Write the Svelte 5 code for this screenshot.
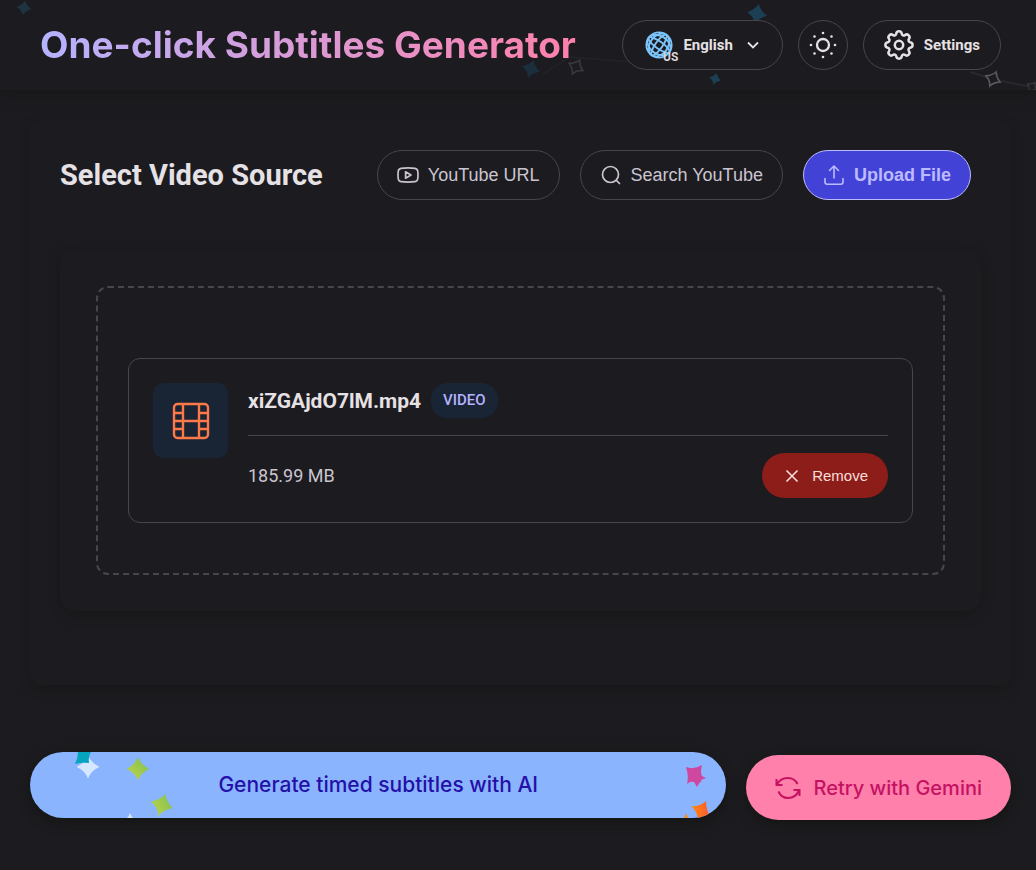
<script>
  const polar = (r, deg) => {
    const a = (deg * Math.PI) / 180;
    return `${(16 + r * Math.cos(a)).toFixed(2)} ${(16 + r * Math.sin(a)).toFixed(2)}`;
  };

  // Eight rounded teeth joined by concave valleys.
  let gearPath = `M${polar(11.5, -14)}`;
  for (let i = 0; i < 8; i++) {
    const a = i * 45;
    gearPath += `A2.8 2.8 0 0 1 ${polar(11.5, a + 14)}A2 2 0 0 0 ${polar(11.5, a + 31)}`;
  }
  gearPath += 'Z';

  const rays = [0, 45, 90, 135, 180, 225, 270, 315].map((deg) => {
    const a = (deg * Math.PI) / 180;
    return { x: 14 + 12 * Math.cos(a), y: 14 + 12 * Math.sin(a) };
  });

  const star = 'M0 -12Q3.5 -4.500 12 0Q3.5 3.500 0 12Q-3.5 3.500 -12 0Q-3.5 -4.500 0 -12Z';

  let source = $state('upload');
  let hasFile = $state(true);
</script>

<header>
  <svg class="sky left" width="60" height="90" aria-hidden="true">
    <path d={star} transform="translate(24 8) rotate(8) scale(.62)" fill="#1c3541" />
  </svg>
  <svg class="sky right" width="536" height="90" aria-hidden="true">
    <path d="M43 74L70 57Q110 60 160 65" fill="none" stroke="#222125" stroke-width="2" />
    <path d="M470 72L492 79L536 88" fill="none" stroke="#29282c" stroke-width="2" />
    <path d={star} transform="translate(31 69) rotate(18) scale(.78)" fill="#1b2e3b" />
    <path d={star} transform="translate(76 67) rotate(28) scale(.64)" fill="#1d1c20" stroke="#39383c" stroke-width="2.500" />
    <path d={star} transform="translate(257 14) rotate(10) scale(.84)" fill="#1d3f54" />
    <path d={star} transform="translate(215 79) rotate(16) scale(.5)" fill="#1d3f54" />
    <path d={star} transform="translate(493 79) rotate(24) scale(.64)" fill="#1d1c20" stroke="#59585c" stroke-width="2.500" />
    <path d={star} transform="translate(532 87) rotate(35) scale(.45)" fill="#1d1c20" stroke="#3d3c40" stroke-width="2.500" />
  </svg>

  <h1>One-click Subtitles Generator</h1>

  <div class="actions">
    <button class="outline language" type="button">
      <span class="globe">
        <svg width="28" height="28" viewBox="0 0 28 28" fill="none" stroke="#7cc4fa" stroke-width="1.900" aria-hidden="true">
          <circle cx="14" cy="14" r="12.600" />
          <g transform="rotate(35 14 14)">
            <ellipse cx="14" cy="14" rx="3.600" ry="12.600" />
            <ellipse cx="14" cy="14" rx="9" ry="12.600" />
            <ellipse cx="14" cy="14" rx="12.600" ry="3.600" />
            <ellipse cx="14" cy="14" rx="12.600" ry="9" />
          </g>
        </svg>
        <span class="region">US</span>
      </span>
      <span>English</span>
      <svg class="chevron" width="14" height="14" viewBox="0 0 14 14" fill="none" stroke="currentColor" stroke-width="1.8" aria-hidden="true"><path d="M2 4.500L7 9.500L12 4.500" /></svg>
    </button>
    <button class="outline theme" type="button" aria-label="Toggle theme">
      <svg width="28" height="28" viewBox="0 0 28 28" aria-hidden="true">
        <circle cx="14" cy="14" r="6" fill="none" stroke="currentColor" stroke-width="2.300" />
        {#each rays as ray}
          <circle cx={ray.x} cy={ray.y} r="1.300" fill="currentColor" />
        {/each}
      </svg>
    </button>
    <button class="outline settings" type="button">
      <svg width="32" height="32" viewBox="0 0 32 32" fill="none" stroke="currentColor" stroke-width="2.500" aria-hidden="true">
        <path d={gearPath} />
        <circle cx="16" cy="16" r="4.200" />
      </svg>
      <span>Settings</span>
    </button>
  </div>
</header>

<main>
  <section class="card">
    <div class="card-head">
      <h2>Select Video Source</h2>
      <div class="tabs">
        <button class="tab" class:active={source === 'url'} type="button" onclick={() => (source = 'url')}>
          <svg width="22" height="22" viewBox="0 0 22 22" fill="none" stroke="currentColor" stroke-width="1.700" stroke-linejoin="round" aria-hidden="true">
            <path d="M4 4.400Q11 3.500 18 4.400Q20.500 4.700 20.800 7.500Q21.200 11 20.800 14.500Q20.500 17.300 18 17.600Q11 18.500 4 17.600Q1.500 17.300 1.200 14.500Q.8 11 1.200 7.500Q1.500 4.700 4 4.400Z" />
            <path d="M8.600 7.800V14.200L14 11Z" />
          </svg>
          YouTube URL
        </button>
        <button class="tab" class:active={source === 'search'} type="button" onclick={() => (source = 'search')}>
          <svg width="22" height="22" viewBox="0 0 22 22" fill="none" stroke="currentColor" stroke-width="1.700" stroke-linecap="round" aria-hidden="true">
            <circle cx="10.500" cy="10.500" r="8" />
            <path d="M16.500 16.500L19.500 19.500" />
          </svg>
          Search YouTube
        </button>
        <button class="tab" class:active={source === 'upload'} type="button" onclick={() => (source = 'upload')}>
          <svg width="22" height="22" viewBox="0 0 22 22" fill="none" stroke="currentColor" stroke-width="1.600" stroke-linecap="round" stroke-linejoin="round" aria-hidden="true">
            <path d="M11 14V2.500M6.500 6.500L11 2L15.500 6.500M2 14.500V18Q2 20.200 4.200 20.200H17.800Q20 20.200 20 18V14.500" />
          </svg>
          Upload File
        </button>
      </div>
    </div>

    <div class="panel">
      <div class="dropzone">
        {#if hasFile}
          <article class="file">
            <div class="thumb">
              <svg width="38" height="38" viewBox="0 0 38 38" fill="none" stroke="#ff7849" stroke-width="2.400" aria-hidden="true">
                <rect x="2" y="2" width="34" height="34" rx="3.500" />
                <path d="M11 2V36M27 2V36M11 19H27M2 11H11M2 19H11M2 27H11M27 11H36M27 19H36M27 27H36" />
              </svg>
            </div>
            <div class="info">
              <div class="name-row">
                <h3>xiZGAjdO7lM.mp4</h3>
                <span class="badge">VIDEO</span>
              </div>
              <div class="meta-row">
                <span class="size">185.99 MB</span>
                <button class="remove" type="button" onclick={() => (hasFile = false)}>
                  <svg width="20" height="20" viewBox="0 0 20 20" fill="none" stroke="currentColor" stroke-width="1.600" aria-hidden="true"><path d="M4.500 4.500L15.500 15.500M15.500 4.500L4.500 15.500" /></svg>
                  Remove
                </button>
              </div>
            </div>
          </article>
        {/if}
      </div>
    </div>
  </section>

  <div class="bottom">
    <button class="generate" type="button">
      <svg class="confetti start" width="160" height="66" aria-hidden="true">
        <defs>
          <linearGradient id="lime" x1="0" y1="1" x2="1" y2="0">
            <stop offset="0" stop-color="#c6d545" /><stop offset="1" stop-color="#7abf55" />
          </linearGradient>
        </defs>
        <path d={star} transform="translate(58 15) scale(.95)" fill="#d6e8ff" />
        <path d="M48 0H61Q58 5 59 11Q52 10 45 12Q48 6 48 0Z" fill="#05a5bf" />
        <path d={star} transform="translate(108 17) scale(.95)" fill="url(#lime)" />
        <path d={star} transform="translate(132 53) rotate(17) scale(.95)" fill="url(#lime)" />
        <path d="M97 66Q99 64 100 61Q101 64 103 66Z" fill="#d6e8ff" />
      </svg>
      <span>Generate timed subtitles with AI</span>
      <svg class="confetti end" width="80" height="66" aria-hidden="true">
        <defs>
          <linearGradient id="sunset"><stop offset="0" stop-color="#ff8b0f" /><stop offset="1" stop-color="#fa5a30" /></linearGradient>
        </defs>
        <path d="M40 15Q48 18 56 13Q54 20 56 24L60 26L55 28Q56 31 54 30L51 35L48 30Q44 29 41 32Q43 24 40 15Z" fill="#cf489f" />
        <path d="M45 54Q54 55 60 49Q60 56 64 66H52Q50 58 45 54Z" fill="url(#sunset)" />
        <path d="M38 66L40 61L42 66Z" fill="#ff8b0f" />
      </svg>
    </button>
    <button class="retry" type="button">
      <svg width="26" height="26" viewBox="0 0 26 26" fill="none" stroke="currentColor" stroke-width="2" aria-hidden="true">
        <path d="M1.500 4V10H7.500M2 9.500C4 5.500 8 3 13 3C17 3 20.500 5 22.500 9M24.500 21V15H18.500M24 15.500C22 20 18 23 13 23C9 23 5.500 21 3.500 16.500" />
      </svg>
      Retry with Gemini
    </button>
  </div>
</main>

<style>
  :global(body) {
    margin: 0;
    background: #1c1b1f;
    color: #e6e1e5;
    font-family: Roboto, sans-serif;
  }

  button {
    display: flex;
    align-items: center;
    box-sizing: border-box;
    cursor: pointer;
    white-space: nowrap;
  }

  svg {
    flex: none;
  }

  h1,
  h2,
  h3 {
    margin: 0;
  }

  header {
    position: relative;
    display: flex;
    align-items: center;
    justify-content: space-between;
    padding: 20px 35px 20px 40px;
    box-shadow: 0 4px 12px rgba(18, 20, 16, 0.5);
  }

  .sky {
    position: absolute;
    top: 0;
    filter: blur(0.5px);
  }

  .sky.left {
    left: 0;
  }

  .sky.right {
    right: 0;
  }

  h1 {
    position: relative;
    background: linear-gradient(90deg, #b5b3ff, #ff80ab);
    background-clip: text;
    color: transparent;
    font: 700 37px/50px Inter, sans-serif;
    white-space: nowrap;
  }

  .actions {
    position: relative;
    display: flex;
    gap: 15px;
  }

  .outline {
    height: 50px;
    border: 1px solid #48464c;
    border-radius: 25px;
    background: #1c1b1f;
    color: #e6e1e5;
    font: 700 15px/20px Roboto, sans-serif;
  }

  .language {
    gap: 10px;
    padding: 0 22px;
  }

  .globe {
    position: relative;
    display: flex;
  }

  .region {
    position: absolute;
    right: -5px;
    bottom: -5px;
    color: #d9d5da;
    font-size: 12px;
    line-height: 14px;
  }

  .chevron {
    margin-left: 3px;
  }

  .theme {
    width: 50px;
    justify-content: center;
    padding: 0;
  }

  .settings {
    gap: 9px;
    padding: 0 20px 0 19px;
  }

  main {
    padding: 30px 25px 50px 30px;
  }

  .card {
    padding: 30px 30px 74px;
    border-radius: 12px;
    box-shadow: 0 4px 12px rgba(18, 20, 16, 0.4);
  }

  .card-head {
    display: flex;
    align-items: center;
    justify-content: space-between;
    padding-right: 10px;
  }

  h2 {
    font: 700 29px/36px Roboto, sans-serif;
    white-space: nowrap;
  }

  .tabs {
    display: flex;
    gap: 20px;
  }

  .tab {
    height: 50px;
    gap: 9px;
    padding: 0 19px;
    border: 1px solid #48464c;
    border-radius: 25px;
    background: transparent;
    color: #cac4d0;
    font: 400 18px/24px "Liberation Sans", Arial, sans-serif;
  }

  .tab.active {
    border-color: #bcbaff;
    background: #4242d6;
    color: #bcbaff;
    font-weight: 700;
  }

  .panel {
    margin-top: 50px;
    padding: 36px;
    border-radius: 16px;
    box-shadow: 0 4px 12px rgba(18, 20, 16, 0.4);
  }

  .dropzone {
    padding: 70px 30px 50px;
    border: 2px dashed #48464c;
    border-radius: 12px;
  }

  .file {
    display: flex;
    gap: 20px;
    padding: 24px;
    border: 1px solid #48464c;
    border-radius: 12px;
  }

  .thumb {
    display: flex;
    align-items: center;
    justify-content: center;
    width: 75px;
    height: 75px;
    border-radius: 10px;
    background: #192434;
  }

  .info {
    flex: 1;
  }

  .name-row {
    display: flex;
    align-items: center;
    gap: 10px;
    padding-bottom: 17px;
    border-bottom: 1px solid #48464c;
  }

  h3 {
    font: 700 21px/28px Roboto, sans-serif;
  }

  .badge {
    padding: 0 12px;
    border-radius: 16px;
    background: #192434;
    color: #b5b3ff;
    font-size: 15px;
    font-weight: 500;
    line-height: 35px;
  }

  .meta-row {
    display: flex;
    align-items: center;
    justify-content: space-between;
    padding-top: 17px;
  }

  .size {
    color: #cac4d0;
    font-size: 18px;
  }

  .remove {
    height: 45px;
    gap: 10px;
    padding: 0 20px;
    border: 0;
    border-radius: 23px;
    background: #8c1d18;
    color: #f9dedc;
    font: 400 15px/20px "Liberation Sans", Arial, sans-serif;
  }

  .bottom {
    display: flex;
    align-items: flex-end;
    gap: 20px;
    margin-top: 67px;
  }

  .generate,
  .retry {
    justify-content: center;
    border: 0;
    border-radius: 33px;
    box-shadow: 0 4px 12px rgba(18, 20, 16, 0.8);
  }

  .generate {
    position: relative;
    flex: 1;
    height: 66px;
    margin-bottom: 2px;
    overflow: hidden;
    background: #8bb4ff;
    color: #2310a8;
    font: 500 21px/28px Inter, sans-serif;
  }

  .confetti {
    position: absolute;
    top: 0;
    filter: blur(0.5px);
  }

  .confetti.start {
    left: 0;
  }

  .confetti.end {
    right: 0;
  }

  .retry {
    height: 65px;
    gap: 12px;
    padding: 0 29px;
    background: #ff80ab;
    color: #c51162;
    font: 500 20px/28px Inter, sans-serif;
  }
</style>
